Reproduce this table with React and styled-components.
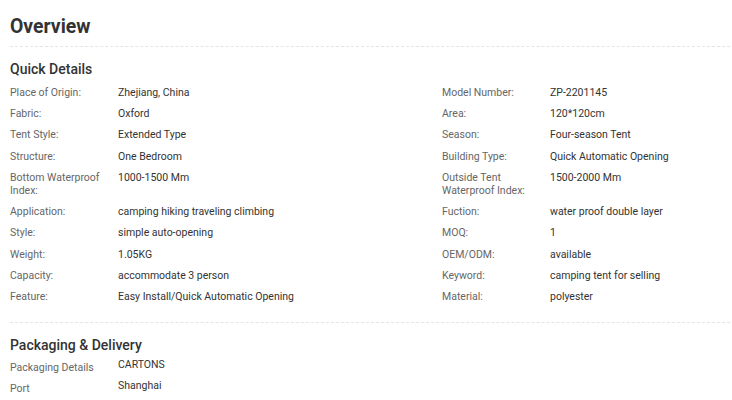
import React from 'react'
import styled, { createGlobalStyle } from 'styled-components'

const Global = createGlobalStyle`
  body {
    margin: 0;
    background: #fff;
    font-family: Roboto, "Liberation Sans", Arial, sans-serif;
  }
`;

const Page = styled.div`
  padding: 14px 2px 0 10px;
  width: 720px;
`;

const Title = styled.h2`
  margin: 0;
  font-size: 19.4px;
  font-weight: 700;
  color: #333;
  line-height: 26px;
  padding-bottom: 6px;
  border-bottom: 1px dashed #e5e5e5;
`;

const Section = styled.div`
  padding: 13px 0 ${p => (p.last ? '0' : '15px')};
  border-bottom: ${p => (p.last ? 'none' : '1px dashed #e5e5e5')};
`;

const SectionTitle = styled.h3`
  margin: 0 0 ${p => (p.tight ? '2px' : '4px')};
  font-size: 14px;
  font-weight: 500;
  color: #333;
  line-height: 18px;
`;

const Grid = styled.div`
  display: grid;
  grid-template-columns: 60% 40%;
`;

const Row = styled.div`
  display: flex;
  font-size: 10.5px;
  line-height: 13.2px;
  padding: ${p => (p.pack ? '2px 0 3px' : '4px 0')};
`;

const Label = styled.div`
  width: 108px;
  flex-shrink: 0;
  padding-right: 8px;
  box-sizing: border-box;
  color: #666;
  padding-top: ${p => (p.offset ? '3px' : '0')};
`;

const Value = styled.div`
  color: #333;
`;

const quick = [
  ['Place of Origin:', 'Zhejiang, China', 'Model Number:', 'ZP-2201145'],
  ['Fabric:', 'Oxford', 'Area:', '120*120cm'],
  ['Tent Style:', 'Extended Type', 'Season:', 'Four-season Tent'],
  ['Structure:', 'One Bedroom', 'Building Type:', 'Quick Automatic Opening'],
  ['Bottom Waterproof Index:', '1000-1500 Mm', 'Outside Tent Waterproof Index:', '1500-2000 Mm'],
  ['Application:', 'camping hiking traveling climbing', 'Fuction:', 'water proof double layer'],
  ['Style:', 'simple auto-opening', 'MOQ:', '1'],
  ['Weight:', '1.05KG', 'OEM/ODM:', 'available'],
  ['Capacity:', 'accommodate 3 person', 'Keyword:', 'camping tent for selling'],
  ['Feature:', 'Easy Install/Quick Automatic Opening', 'Material:', 'polyester'],
];

const packing = [
  ['Packaging Details', 'CARTONS'],
  ['Port', 'Shanghai'],
];

export default function App() {
  return (
    <Page>
      <Global />
      <Title>Overview</Title>
      <Section>
        <SectionTitle>Quick Details</SectionTitle>
        <Grid>
          {quick.map((r, i) => (
            <React.Fragment key={i}>
              <Row>
                <Label>{r[0]}</Label>
                <Value>{r[1]}</Value>
              </Row>
              <Row>
                <Label>{r[2]}</Label>
                <Value>{r[3]}</Value>
              </Row>
            </React.Fragment>
          ))}
        </Grid>
      </Section>
      <Section last>
        <SectionTitle tight>Packaging &amp; Delivery</SectionTitle>
        {packing.map((r, i) => (
          <Row pack key={i}>
            <Label offset>{r[0]}</Label>
            <Value>{r[1]}</Value>
          </Row>
        ))}
      </Section>
    </Page>
  )
}
